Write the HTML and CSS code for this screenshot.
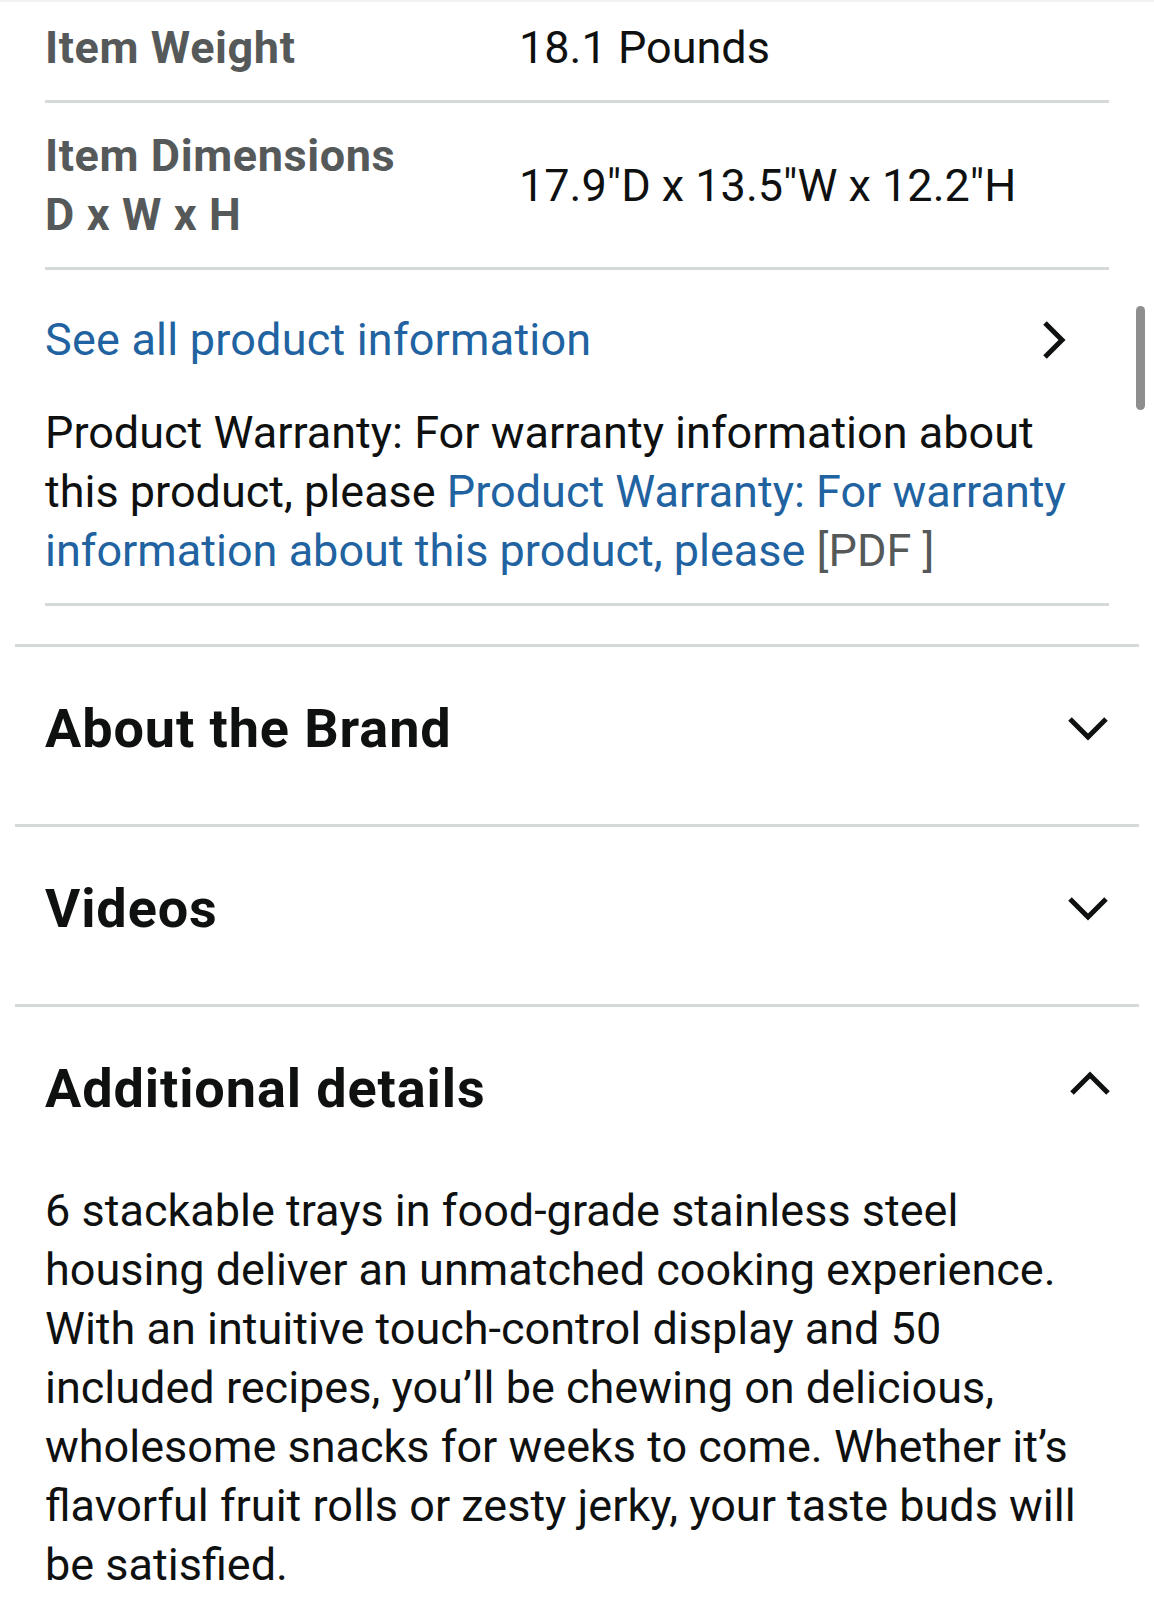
FILE: index.html
```html
<!DOCTYPE html>
<html lang="en">
<head>
    <meta charset="UTF-8">
    <meta name="viewport" content="width=device-width, initial-scale=1.0">
    <title>Product details</title>
    <link rel="stylesheet" href="styles.css">
</head>
<body>
    <main class="page">
        <section class="details">
            <div class="spec-table">
                <div class="spec-row">
                    <div class="spec-label">Item Weight</div>
                    <div class="spec-value">18.1 Pounds</div>
                </div>
                <div class="spec-row">
                    <div class="spec-label">Item Dimensions D x W x H</div>
                    <div class="spec-value">17.9&quot;D x 13.5&quot;W x 12.2&quot;H</div>
                </div>
            </div>

            <a class="see-all" href="#">
                <span>See all product information</span>
                <svg class="chevron-right" width="30" height="42" viewBox="0 0 30 42">
                    <path d="M6 4 L23 21 L6 38" />
                </svg>
            </a>

            <p class="warranty">
                Product Warranty: For warranty information about this product, please
                <a href="#">Product Warranty: For warranty information about this product, please</a>
                <span class="muted">[PDF ]</span>
            </p>
        </section>

        <section class="expander">
            <div class="expander-head">
                <h2>About the Brand</h2>
                <svg class="chevron" width="44" height="28" viewBox="0 0 44 28">
                    <path d="M4 4 L22 22 L40 4" />
                </svg>
            </div>
        </section>

        <section class="expander">
            <div class="expander-head">
                <h2>Videos</h2>
                <svg class="chevron" width="44" height="28" viewBox="0 0 44 28">
                    <path d="M4 4 L22 22 L40 4" />
                </svg>
            </div>
        </section>

        <section class="expander open">
            <div class="expander-head">
                <h2>Additional details</h2>
                <svg class="chevron up" width="44" height="28" viewBox="0 0 44 28">
                    <path d="M4 24 L22 6 L40 24" />
                </svg>
            </div>
            <div class="expander-body">
                <p>6 stackable trays in food-grade stainless steel housing deliver an unmatched cooking experience. With an intuitive touch-control display and 50 included recipes, you’ll be chewing on delicious, wholesome snacks for weeks to come. Whether it’s flavorful fruit rolls or zesty jerky, your taste buds will be satisfied.</p>
            </div>
        </section>
    </main>

    <div class="scroll-indicator"></div>
</body>
</html>
```

FILE: styles.css
```css
body {
    margin: 0;
    padding: 0;
    background-color: #fff;
    color: #0f1111;
    font-family: Roboto, "Liberation Sans", Arial, sans-serif;
    font-size: 45px;
    line-height: 59px;
}
.page {
    border-top: 2px solid #f2f2f2;
    padding: 0 15px 40px;
}
.details {
    padding: 0 30px;
    margin-bottom: 38px;
}
.spec-row {
    display: grid;
    grid-template-columns: 370px 1fr;
    column-gap: 104px;
    align-items: center;
    padding: 23px 0;
    border-bottom: 3px solid #d5d9d9;
}
.spec-row:first-child {
    padding-top: 16px;
}
.spec-label {
    font-weight: bold;
    color: #565959;
    letter-spacing: 0.6px;
}
.spec-value {
    color: #0f1111;
}
.see-all {
    display: flex;
    justify-content: space-between;
    align-items: center;
    padding: 40px 40px 0 0;
    color: #2162a1;
    text-decoration: none;
    letter-spacing: 0.2px;
}
.chevron-right path,
.chevron path {
    fill: none;
    stroke: #0f1111;
    stroke-width: 5;
}
.warranty {
    margin: 34px 0 0;
    padding-bottom: 23px;
    border-bottom: 3px solid #d5d9d9;
}
.warranty a {
    color: #2162a1;
    text-decoration: none;
}
.muted {
    color: #565959;
}
.expander {
    border-top: 3px solid #d5d9d9;
}
.expander-head {
    display: flex;
    justify-content: space-between;
    align-items: center;
    padding: 47px 30px 60px;
}
.expander.open .expander-head {
    padding-bottom: 57px;
}
.expander-head h2 {
    margin: 0;
    font-size: 54px;
    line-height: 70px;
    font-weight: bold;
    letter-spacing: 0.9px;
    color: #0f1111;
}
.chevron {
    margin-right: -1px;
}
.chevron.up {
    margin-bottom: 12px;
    margin-right: -3px;
}
.expander-body {
    padding: 0 30px;
}
.expander-body p {
    margin: 0;
}
.scroll-indicator {
    position: fixed;
    top: 306px;
    right: 9px;
    width: 9px;
    height: 104px;
    border-radius: 5px;
    background-color: #8e8e8e;
}
```
